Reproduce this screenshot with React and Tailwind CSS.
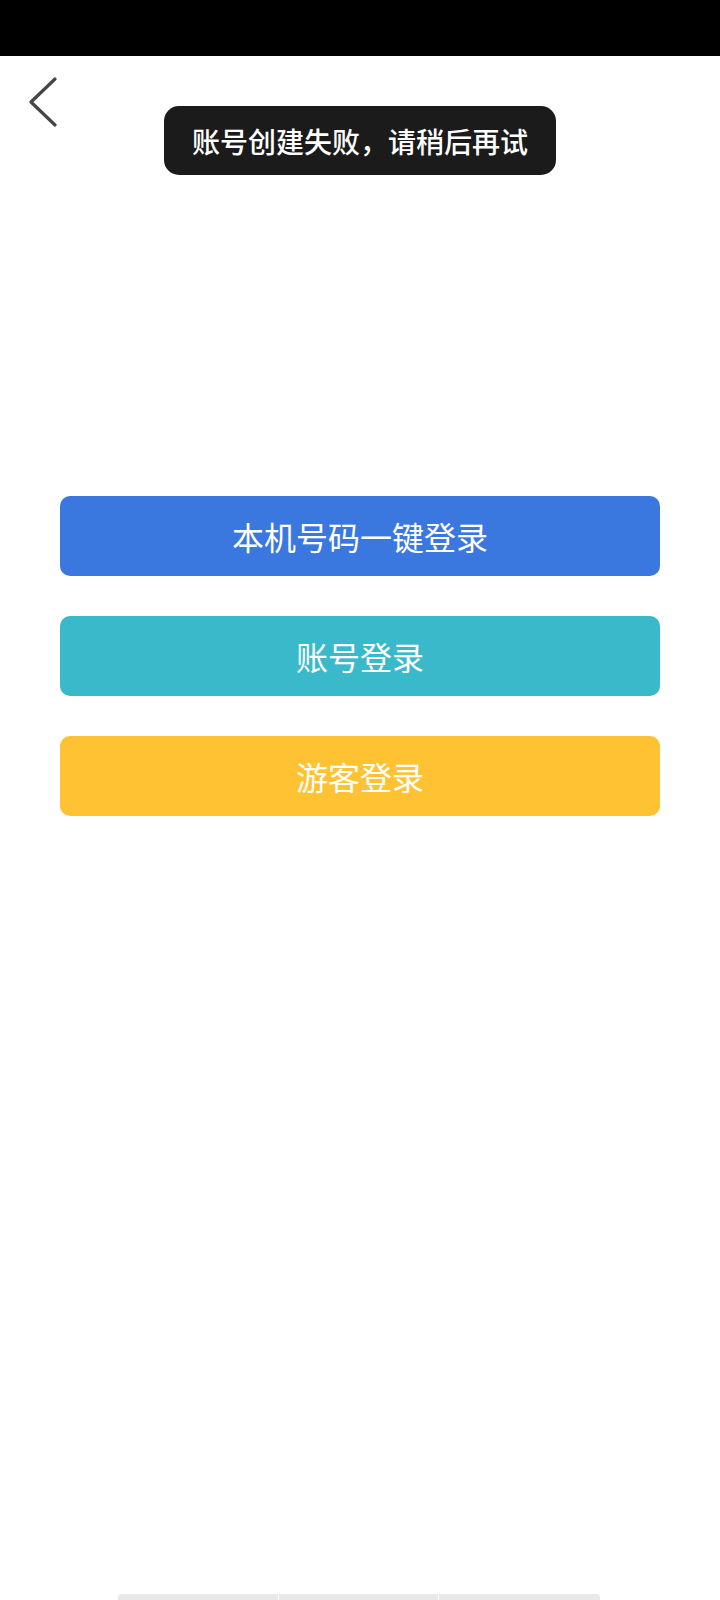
import React from 'react';

const font = { fontFamily: '"Noto Sans CJK SC", "Noto Sans", sans-serif' };

function LoginButton({ label, color }) {
  return (
    <button
      className={`w-full h-[80px] rounded-[10px] text-white text-[32px] font-normal flex items-center justify-center ${color}`}
    >
      {label}
    </button>
  );
}

export default function App() {
  return (
    <div
      className="relative min-h-[1600px] bg-white flex flex-col overflow-hidden font-['Noto_Sans_CJK_SC',sans-serif]"
      style={font}
    >
      {/* status bar */}
      <div className="h-[56px] bg-black shrink-0"></div>

      {/* back */}
      <div className="pl-[28px] pt-[21px]">
        <svg width="30" height="50" viewBox="0 0 30 50" fill="none">
          <path
            d="M27 2 L3 25 L27 48"
            stroke="#454545"
            strokeWidth="3.2"
            strokeLinecap="round"
            strokeLinejoin="round"
          />
        </svg>
      </div>

      {/* toast */}
      <div className="absolute top-[106px] left-[164px] w-[392px] h-[69px] rounded-[15px] bg-[#1b1b1b] text-white text-[28px] font-medium flex items-center justify-center">
        账号创建失败，请稍后再试
      </div>

      <div className="flex flex-col gap-[40px] px-[60px] mt-[369px]">
        <LoginButton label="本机号码一键登录" color="bg-[#3a78e0]" />
        <LoginButton label="账号登录" color="bg-[#3ab9ca]" />
        <LoginButton label="游客登录" color="bg-[#ffc233]" />
      </div>

      {/* bottom strip */}
      <div className="mt-auto pl-[118px] flex gap-[1px]">
        <div className="w-[160px] h-[6px] bg-[#e8e8e8] rounded-tl-[4px]"></div>
        <div className="w-[159px] h-[6px] bg-[#e8e8e8]"></div>
        <div className="w-[161px] h-[6px] bg-[#e8e8e8] rounded-tr-[4px]"></div>
      </div>
    </div>
  );
}
